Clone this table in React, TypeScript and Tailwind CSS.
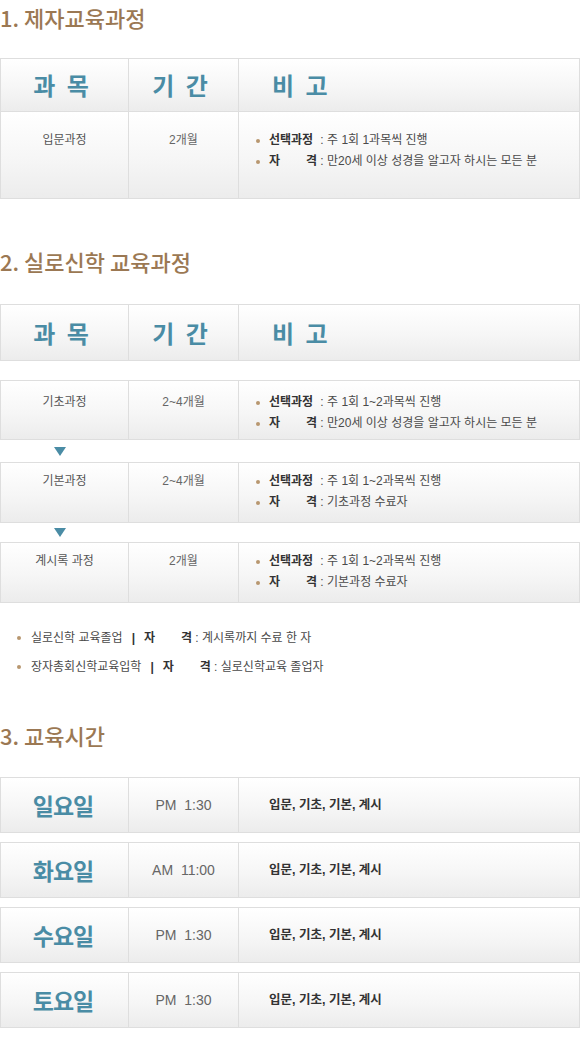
import React from 'react';

const font = "font-['Liberation_Sans','Noto_Sans_CJK_KR',sans-serif]";
const kr = "font-['Noto_Sans_CJK_KR',sans-serif]";
const cellBg = 'bg-[linear-gradient(to_bottom,#ffffff,#f6f6f6_55%,#ececec)]';

function Title({ children, className = '' }: { children: React.ReactNode; className?: string }) {
  return <h2 className={`${kr} text-[22px] leading-[34px] font-medium text-[#9b7853] ${className}`}>{children}</h2>;
}

function Bullet() {
  return <span className="w-[4px] h-[4px] rounded-full bg-[#b8976f] shrink-0" />;
}

function Label({ text }: { text: string }) {
  // "자 격" is spread to the width of "선택과정"
  const chars = text.split(' ');
  return (
    <span className="inline-flex justify-between w-[48px] font-bold text-[#333]">
      {chars.map((c, i) => (
        <span key={i}>{c}</span>
      ))}
    </span>
  );
}

function Notes({ items }: { items: { label: string; value: string }[] }) {
  return (
    <div className="flex flex-col">
      {items.map((it, i) => (
        <div key={i} className="flex items-center gap-[9px] leading-[21px]">
          <Bullet />
          <span className="flex text-[12px] text-[#4a4a4a]">
            <Label text={it.label} />
            <span className="whitespace-pre"> : {it.value}</span>
          </span>
        </div>
      ))}
    </div>
  );
}

function HeadCells() {
  return (
    <>
      <div className={`w-[127px] flex items-center justify-center tracking-[3px] pr-[4px] ${cellBg}`}>과 목</div>
      <div className={`w-[110px] border-l border-[#dedede] flex items-center justify-center tracking-[3px] pr-[4px] ${cellBg}`}>기 간</div>
      <div className={`flex-1 border-l border-[#dedede] flex items-center pl-[33px] tracking-[3px] ${cellBg}`}>비 고</div>
    </>
  );
}

function CourseRow({ name, period, notes, h, pt }: { name: string; period: string; notes: { label: string; value: string }[]; h: string; pt: string }) {
  return (
    <div className={`flex w-[580px] ${h} border border-[#dedede] text-[12px]`}>
      <div className={`w-[127px] flex justify-center ${pt} text-[#555] leading-[21px] ${cellBg}`}>{name}</div>
      <div className={`w-[110px] border-l border-[#dedede] flex justify-center ${pt} text-[#666] leading-[21px] ${cellBg}`}>{period}</div>
      <div className={`flex-1 border-l border-[#dedede] pl-[17px] ${pt} ${cellBg}`}>
        <Notes items={notes} />
      </div>
    </div>
  );
}

function Arrow({ h }: { h: string }) {
  return (
    <div className={`${h} flex items-center pl-[54px]`}>
      <span className="w-0 h-0 border-l-[6px] border-r-[6px] border-t-[9px] border-l-transparent border-r-transparent border-t-[#4a8ca5]" />
    </div>
  );
}

function DayRow({ day, time }: { day: string; time: string }) {
  return (
    <div className="flex w-[580px] h-[56px] border border-[#dedede]">
      <div className={`${kr} w-[127px] flex items-center justify-center pr-[3px] text-[23px] font-bold tracking-[-1px] text-[#4a8ca5] ${cellBg}`}>{day}</div>
      <div className={`w-[110px] border-l border-[#dedede] flex items-center justify-center text-[14px] text-[#666] whitespace-pre ${cellBg}`}>{time}</div>
      <div className={`flex-1 border-l border-[#dedede] flex items-center pl-[30px] text-[12.5px] font-bold text-[#333] ${cellBg}`}>입문, 기초, 기본, 계시</div>
    </div>
  );
}

const qual = '만20세 이상 성경을 알고자 하시는 모든 분';

function Footnote({ lead, value }: { lead: string; value: string }) {
  return (
    <div className="flex items-center gap-[10px] pl-[17px] h-[29px]">
      <Bullet />
      <span className="flex items-center whitespace-pre">
        {lead}
        <span className="ml-[9px] mr-[9px] font-bold text-[#333]">|</span>
        <Label text="자 격" />
        {' : '}
        {value}
      </span>
    </div>
  );
}

export default function App() {
  return (
    <div className={`w-[580px] bg-white ${font}`}>
      <Title>1. 제자교육과정</Title>

      <div className="mt-[24px] w-[580px] border border-[#dedede]">
        <div className={`${kr} flex h-[53px] border-b border-[#dedede] text-[24px] font-bold text-[#4a8ca5]`}>
          <HeadCells />
        </div>
        <div className="flex h-[86px] text-[12px]">
          <div className={`w-[127px] flex justify-center pt-[18px] text-[#555] leading-[21px] ${cellBg}`}>입문과정</div>
          <div className={`w-[110px] border-l border-[#dedede] flex justify-center pt-[18px] text-[#666] leading-[21px] ${cellBg}`}>2개월</div>
          <div className={`flex-1 border-l border-[#dedede] pl-[17px] pt-[18px] ${cellBg}`}>
            <Notes
              items={[
                { label: '선택과정', value: '주 1회 1과목씩 진행' },
                { label: '자 격', value: qual },
              ]}
            />
          </div>
        </div>
      </div>

      <Title className="mt-[45px]">2. 실로신학 교육과정</Title>

      <div className={`${kr} mt-[26px] flex w-[580px] h-[57px] border border-[#dedede] text-[24px] font-bold text-[#4a8ca5]`}>
        <HeadCells />
      </div>

      <div className="mt-[19px] flex flex-col">
        <CourseRow
          name="기초과정"
          period="2~4개월"
          h="h-[60px]"
          pt="pt-[11px]"
          notes={[
            { label: '선택과정', value: '주 1회 1~2과목씩 진행' },
            { label: '자 격', value: qual },
          ]}
        />
        <Arrow h="h-[22px]" />
        <CourseRow
          name="기본과정"
          period="2~4개월"
          h="h-[61px]"
          pt="pt-[8px]"
          notes={[
            { label: '선택과정', value: '주 1회 1~2과목씩 진행' },
            { label: '자 격', value: '기초과정 수료자' },
          ]}
        />
        <Arrow h="h-[19px]" />
        <CourseRow
          name="계시록 과정"
          period="2개월"
          h="h-[61px]"
          pt="pt-[8px]"
          notes={[
            { label: '선택과정', value: '주 1회 1~2과목씩 진행' },
            { label: '자 격', value: '기본과정 수료자' },
          ]}
        />
      </div>

      <div className="mt-[20px] flex flex-col text-[12px] text-[#4a4a4a]">
        <Footnote lead="실로신학 교육졸업" value="계시록까지 수료 한 자" />
        <Footnote lead="장자총회신학교육입학" value="실로신학교육 졸업자" />
      </div>

      <Title className="mt-[37px]">3. 교육시간</Title>

      <div className="mt-[25px] flex flex-col gap-[9px] pb-[10px]">
        <DayRow day="일요일" time="PM  1:30" />
        <DayRow day="화요일" time="AM  11:00" />
        <DayRow day="수요일" time="PM  1:30" />
        <DayRow day="토요일" time="PM  1:30" />
      </div>
    </div>
  );
}
